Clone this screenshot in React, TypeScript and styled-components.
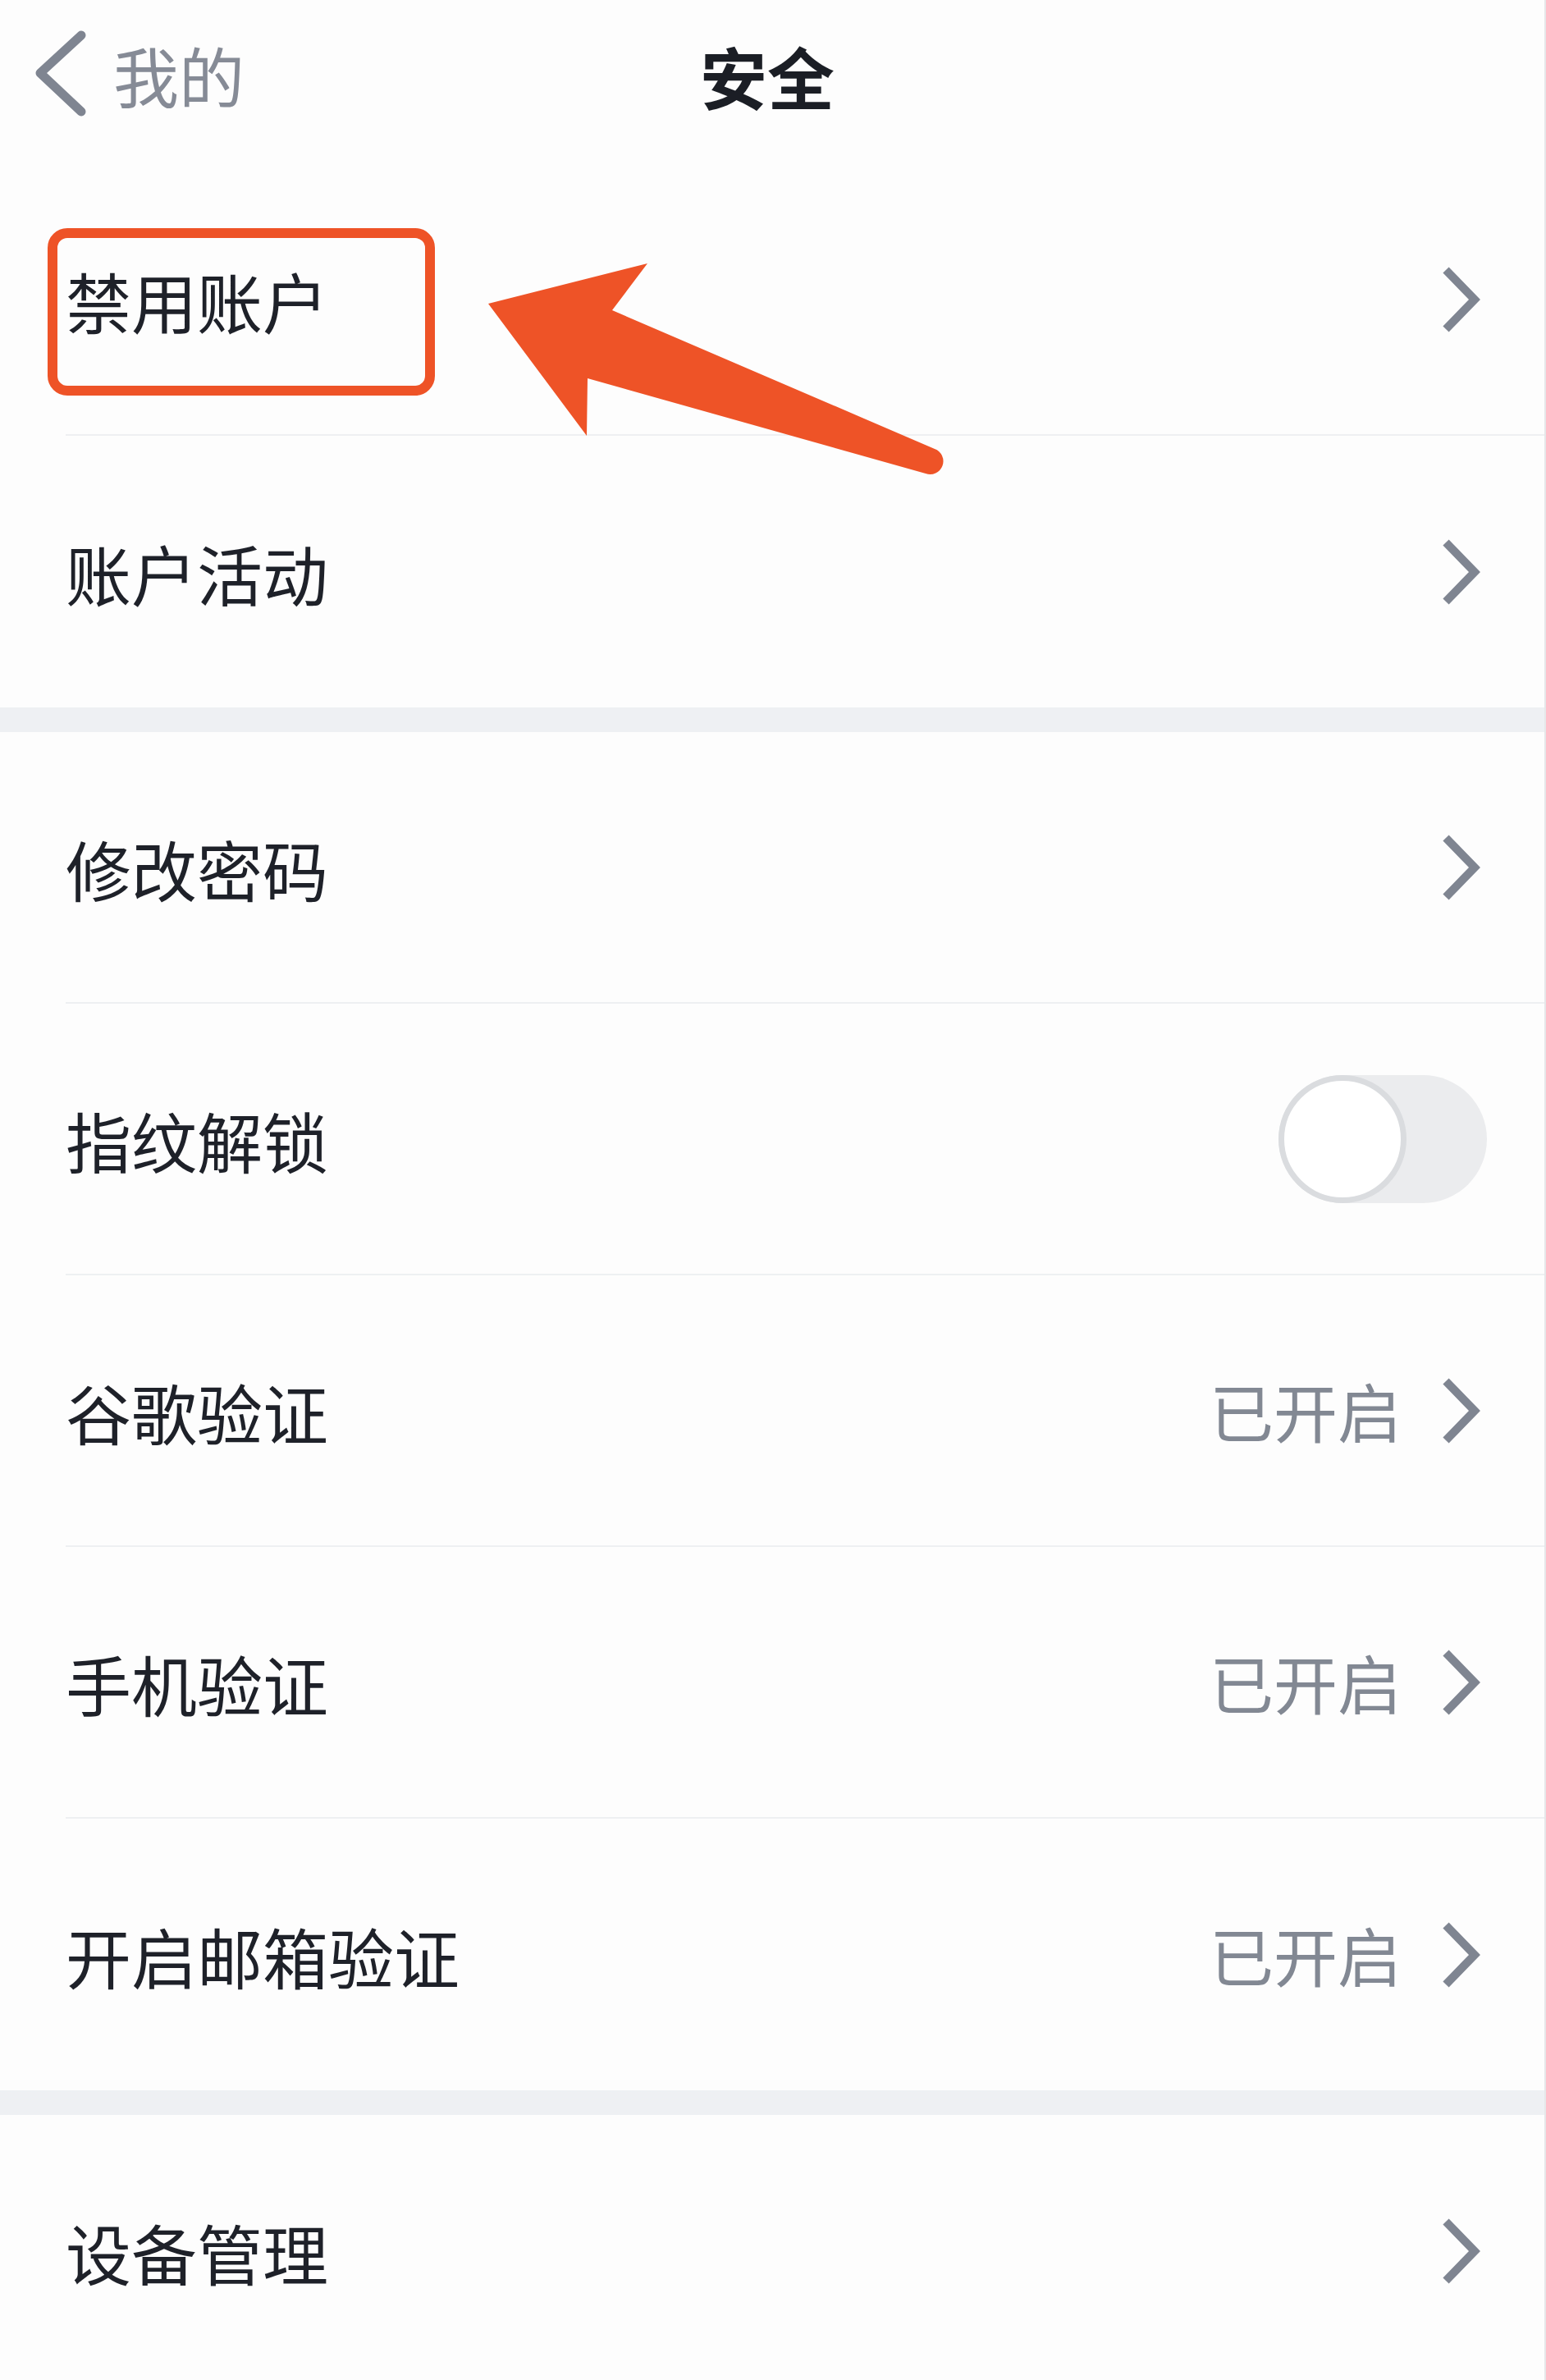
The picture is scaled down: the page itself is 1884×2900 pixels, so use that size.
import React, {useState} from 'react';
import styled, {createGlobalStyle} from 'styled-components';

const GlobalStyle = createGlobalStyle`
  html, body {
    margin: 0;
    padding: 0;
    background: #ffffff;
  }
  body {
    font-family: "Noto Sans CJK SC", "Noto Sans", sans-serif;
  }
`;

const Page = styled.div`
  width: 1882px;
  min-height: 2900px;
  background: #fdfdfd;
  border-right: 2px solid #e6e7e9;
  overflow: hidden;
`;

const Header = styled.header`
  display: grid;
  grid-template-columns: 1fr auto 1fr;
  align-items: center;
  height: 180px;
  padding-bottom: 20px;
`;

const Back = styled.div`
  display: flex;
  align-items: center;
  gap: 32px;
  padding-left: 40px;
  color: #868b96;
  font-size: 80px;
  line-height: 1.2;
`;

const Title = styled.h1`
  margin: 0;
  font-size: 82px;
  font-weight: 600;
  line-height: 1.2;
  color: #1b1e25;
  transform: translate(-6px, 2px);
`;

const Section = styled.section`
  background: #fdfdfd;
`;

const Gap = styled.div`
  height: 30px;
  background: #eef0f3;
`;

const Row = styled.div`
  position: relative;
  padding-left: 80px;
`;

const RowInner = styled.div<{$last?: boolean}>`
  display: flex;
  align-items: center;
  height: ${p => (p.$last ? 331 : 329)}px;
  padding-right: 70px;
  border-bottom: ${p => (p.$last ? 'none' : '2px solid #eef0f2')};
`;

const Label = styled.span`
  flex: 1;
  font-size: 80px;
  line-height: 1.2;
  color: #1e2129;
`;

const Value = styled.span`
  font-size: 78px;
  line-height: 1.2;
  color: #828893;
  margin-right: 44px;
`;

const Track = styled.button<{$on: boolean}>`
  position: relative;
  width: 254px;
  height: 156px;
  padding: 0;
  border: none;
  border-radius: 78px;
  background: ${p => (p.$on ? '#4cd964' : '#ebecee')};
  cursor: pointer;
`;

const Knob = styled.span<{$on: boolean}>`
  position: absolute;
  top: 0;
  left: ${p => (p.$on ? '98px' : '0')};
  width: 156px;
  height: 156px;
  box-sizing: border-box;
  border-radius: 50%;
  background: #ffffff;
  border: 7px solid #dadcdf;
`;

const Highlight = styled.div`
  position: absolute;
  left: 58px;
  top: 78px;
  width: 472px;
  height: 204px;
  box-sizing: border-box;
  border: 12px solid #ee5327;
  border-radius: 24px;
  z-index: 2;
  pointer-events: none;
`;

const Pointer = styled.svg`
  position: absolute;
  left: 0;
  top: 0;
  z-index: 2;
  pointer-events: none;
`;

const Chevron = () => (
  <svg width="60" height="86" viewBox="0 0 60 86">
    <polyline
      points="10,7 45,43 10,79"
      fill="none"
      stroke="#7f8591"
      strokeWidth="10"
      strokeLinejoin="miter"
    />
  </svg>
);

const BackArrow = () => (
  <svg width="66" height="108" viewBox="0 0 66 108">
    <polyline
      points="59,7 9,53 59,100"
      fill="none"
      stroke="#7f8591"
      strokeWidth="11"
      strokeLinecap="round"
      strokeLinejoin="round"
    />
  </svg>
);

type Item = {
  label: string;
  value?: string;
  toggle?: boolean;
};

const sections: Item[][] = [
  [{label: '禁用账户'}, {label: '账户活动'}],
  [
    {label: '修改密码'},
    {label: '指纹解锁', toggle: true},
    {label: '谷歌验证', value: '已开启'},
    {label: '手机验证', value: '已开启'},
    {label: '开启邮箱验证', value: '已开启'},
  ],
  [{label: '设备管理'}],
];

const Switch = () => {
  const [on, setOn] = useState(false);
  return (
    <Track $on={on} onClick={() => setOn(!on)} aria-label="toggle">
      <Knob $on={on} />
    </Track>
  );
};

export default function App() {
  return (
    <>
      <GlobalStyle />
      <Page>
        <Header>
          <Back>
            <BackArrow />
            <span>我的</span>
          </Back>
          <Title>安全</Title>
          <div />
        </Header>
        {sections.map((items, s) => (
          <React.Fragment key={s}>
            {s > 0 && <Gap />}
            <Section>
              {items.map((item, i) => (
                <Row key={item.label}>
                  <RowInner $last={i === items.length - 1}>
                    <Label>{item.label}</Label>
                    {item.value && <Value>{item.value}</Value>}
                    {item.toggle ? <Switch /> : <Chevron />}
                  </RowInner>
                  {s === 0 && i === 0 && (
                    <>
                      <Highlight />
                      <Pointer width="1200" height="400" viewBox="0 200 1200 400">
                        <path
                          d="M595,370 L789,321 L746,378 L1139,547 A15.5,15.5 0 0 1 1128,577 L716,461 L715,531 Z"
                          fill="#ee5327"
                        />
                      </Pointer>
                    </>
                  )}
                </Row>
              ))}
            </Section>
          </React.Fragment>
        ))}
      </Page>
    </>
  );
}
